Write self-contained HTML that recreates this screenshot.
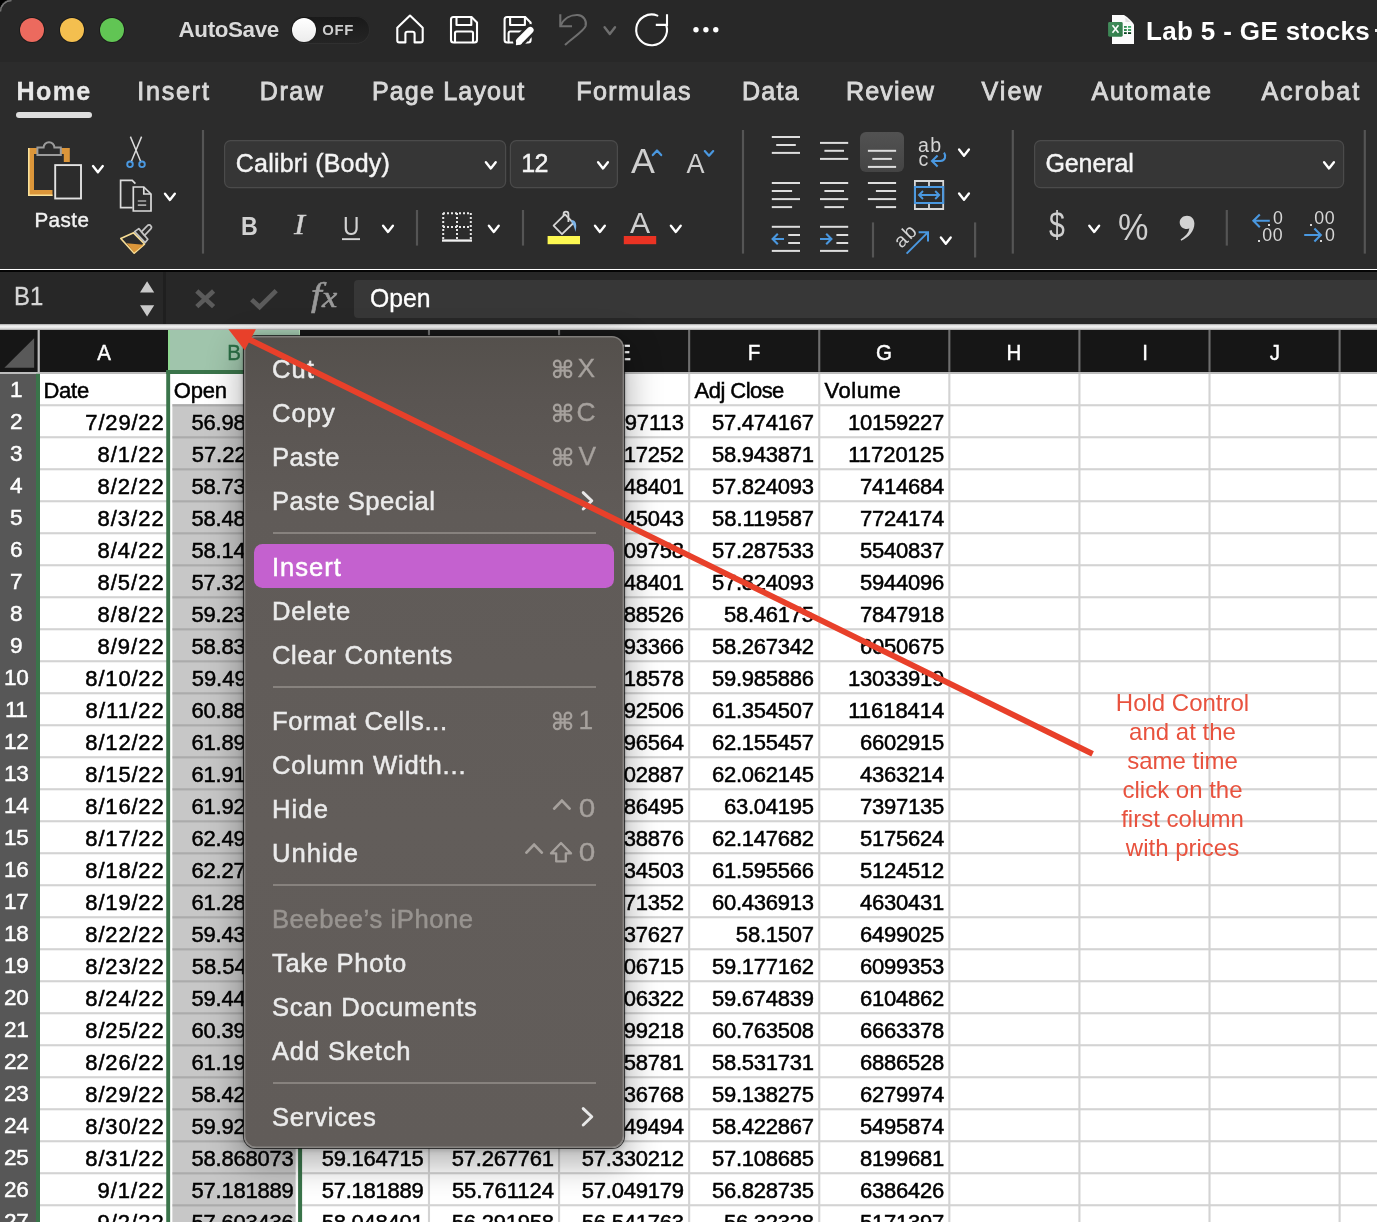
<!DOCTYPE html>
<html><head><meta charset="utf-8"><title>Lab 5 - GE stocks</title>
<style>
html,body{margin:0;padding:0;background:#000;}
body{width:1377px;height:1222px;overflow:hidden;position:relative;font-family:'Liberation Sans', sans-serif;}
#win{position:absolute;left:0;top:0;width:1377px;height:1222px;overflow:hidden;background:#fff;border-top-left-radius:11px;will-change:transform;}
.a{position:absolute;}
.t{position:absolute;white-space:pre;}
svg{position:absolute;overflow:visible;}
</style></head>
<body><div id="win">
<div class="a" style="left:0;top:0;width:1377px;height:62px;background:#282828"></div>
<div class="a" style="left:0;top:62px;width:1377px;height:207px;background:#2c2c2c"></div>
<div class="a" style="left:20px;top:18px;width:24px;height:24px;border-radius:50%;background:#ec6a5e;box-shadow:0 0 0 1px rgba(0,0,0,.32)"></div>
<div class="a" style="left:60px;top:18px;width:24px;height:24px;border-radius:50%;background:#f4bf4f;box-shadow:0 0 0 1px rgba(0,0,0,.32)"></div>
<div class="a" style="left:100px;top:18px;width:24px;height:24px;border-radius:50%;background:#61c554;box-shadow:0 0 0 1px rgba(0,0,0,.32)"></div>
<span class="t" style="top:18.84px;font-size:22.4px;line-height:22.4px;color:#dadada;font-weight:bold;letter-spacing:-0.360px;left:178.50px">AutoSave</span>
<div class="a" style="left:290.2px;top:15.7px;width:79.5px;height:28.3px;border-radius:14.2px;background:linear-gradient(#191919,#252525);box-shadow:inset 0 0 0 1px rgba(70,70,70,.35)"></div>
<div class="a" style="left:292px;top:17.9px;width:24.2px;height:24.2px;border-radius:50%;background:linear-gradient(#ffffff,#ececec);box-shadow:0 0 2px rgba(0,0,0,.5)"></div>
<span class="t" style="top:23.19px;font-size:14.9px;line-height:14.9px;color:#cdcdcd;font-weight:bold;letter-spacing:0.740px;left:322.20px">OFF</span>
<svg width="1377" height="62" style="left:0;top:0" viewBox="0 0 1377 62"><path fill="none" stroke="#fff" stroke-width="2.1" stroke-linejoin="round" stroke-linecap="round" d="M397.3 27.8 L410 15.6 L422.7 27.8 V40.4 a2 2 0 0 1 -2 2 H414.6 V33.8 a2 2 0 0 0 -2 -2 h-5.2 a2 2 0 0 0 -2 2 V42.4 H399.3 a2 2 0 0 1 -2 -2 Z"/><path fill="none" stroke="#fff" stroke-width="2.1" stroke-linejoin="round" stroke-linecap="round" d="M453.5 17 H471.5 L477 22.5 V40 a2.5 2.5 0 0 1 -2.5 2.5 H453.5 a2.5 2.5 0 0 1 -2.5 -2.5 V19.5 a2.5 2.5 0 0 1 2.5 -2.5 Z"/><path fill="none" stroke="#fff" stroke-width="2.1" stroke-linejoin="round" stroke-linecap="round" d="M456.5 17.3 V25 H471.3 V17.3"/><path fill="none" stroke="#fff" stroke-width="2.1" stroke-linejoin="round" stroke-linecap="round" d="M455 42.3 V33 a1.5 1.5 0 0 1 1.5 -1.5 H471.5 a1.5 1.5 0 0 1 1.5 1.5 V42.3"/><path fill="none" stroke="#fff" stroke-width="2.1" stroke-linejoin="round" stroke-linecap="round" d="M507.1 17 H525.1 L530.6 22.5 V40 a2.5 2.5 0 0 1 -2.5 2.5 H507.1 a2.5 2.5 0 0 1 -2.5 -2.5 V19.5 a2.5 2.5 0 0 1 2.5 -2.5 Z"/><path fill="none" stroke="#fff" stroke-width="2.1" stroke-linejoin="round" stroke-linecap="round" d="M510.1 17.3 V25 H524.9 V17.3"/><path fill="none" stroke="#fff" stroke-width="2.1" stroke-linejoin="round" stroke-linecap="round" d="M508.6 42.3 V33 a1.5 1.5 0 0 1 1.5 -1.5 H525.1 a1.5 1.5 0 0 1 1.5 1.5 V42.3"/><path d="M519 41.5 L530.5 30" stroke="#282828" stroke-width="12" stroke-linecap="round" fill="none"/><path d="M519.3 41.2 L530.3 30.2" stroke="#fff" stroke-width="6.6" stroke-linecap="round" fill="none"/><path d="M516.6 44.4 L521 43.4 L517.6 40 Z" fill="#fff" stroke="#fff" stroke-width="1.5" stroke-linejoin="round"/><path fill="none" stroke="#6f6f6f" stroke-width="2.1" stroke-linejoin="miter" stroke-linecap="butt" d="M560.3 14.3 V26.2 H572"/><path fill="none" stroke="#6f6f6f" stroke-width="2.1" stroke-linejoin="miter" stroke-linecap="butt" d="M560.6 25.6 C564 18 571 14.8 577.5 15 C583.5 15.3 587 20.5 585.6 26 C584.3 30.5 572 38.5 565 45"/><path d="M604.6 27.2 L609.8 34.0 L615.0 27.2" fill="none" stroke="#6f6f6f" stroke-width="2.4" stroke-linecap="round" stroke-linejoin="round"/><path fill="none" stroke="#fff" stroke-width="2.1" stroke-linejoin="round" stroke-linecap="round" d="M657.37 15.62 A15.4 15.4 0 1 0 666.33 25.40"/><path fill="none" stroke="#fff" stroke-width="2.1" d="M667 14.3 V24.9 H655.8"/><circle cx="696" cy="29.8" r="2.7" fill="#fff"/><circle cx="705.9" cy="29.8" r="2.7" fill="#fff"/><circle cx="715.8" cy="29.8" r="2.7" fill="#fff"/><path d="M1112 14.9 H1124 C1128 17.5 1132 21 1134 24.6 V43.9 H1112 Z" fill="#fbfbfb"/><path d="M1125.4 17.4 V22 H1130.4 Z" fill="#dedede"/><defs><linearGradient id="xlg" x1="0" y1="0" x2="1" y2="1"><stop offset="0" stop-color="#458f5e"/><stop offset="1" stop-color="#2e7a48"/></linearGradient></defs><rect x="1108.1" y="22.1" width="14.6" height="14.6" rx="1.4" fill="url(#xlg)"/><path d="M1112.5 25.3 L1118.5 32.7 M1118.5 25.3 L1112.5 32.7" stroke="#fff" stroke-width="1.6" fill="none"/><rect x="1124" y="26" width="2.8" height="1.8" fill="#2f8c52"/><rect x="1128" y="26" width="3.1" height="1.8" fill="#3faa68"/><rect x="1124" y="29.1" width="2.8" height="1.8" fill="#1f7a40"/><rect x="1128" y="29.1" width="3.1" height="1.8" fill="#2f9a58"/><rect x="1124" y="32.2" width="2.8" height="1.8" fill="#0a4a24"/><rect x="1128" y="32.2" width="3.1" height="1.8" fill="#063818"/><path d="M0.6 11.5 A10.9 10.9 0 0 1 11.5 0.6" fill="none" stroke="#7a7a7a" stroke-width="1.2"/></svg>
<span class="t" style="top:17.99px;font-size:26px;line-height:26px;color:#ffffff;font-weight:bold;left:1146.00px;letter-spacing:0.35px">Lab 5 - GE stocks</span>
<div class="a" style="left:1375.2px;top:29.2px;width:3px;height:2.6px;background:#e8e8e8"></div>
<span class="t" style="top:78.85px;font-size:25.1px;line-height:25.1px;color:#e8e8e8;font-weight:bold;letter-spacing:1.320px;-webkit-text-stroke:0.3px #e8e8e8;left:16.60px">Home</span>
<div class="a" style="left:16px;top:112px;width:76px;height:6px;border-radius:3px;background:#dedede"></div>
<span class="t" style="top:78.85px;font-size:25.1px;line-height:25.1px;color:#d9d9d9;letter-spacing:1.806px;-webkit-text-stroke:0.85px #d9d9d9;left:137.20px">Insert</span>
<span class="t" style="top:78.85px;font-size:25.1px;line-height:25.1px;color:#d9d9d9;letter-spacing:1.509px;-webkit-text-stroke:0.85px #d9d9d9;left:259.80px">Draw</span>
<span class="t" style="top:78.85px;font-size:25.1px;line-height:25.1px;color:#d9d9d9;letter-spacing:1.143px;-webkit-text-stroke:0.85px #d9d9d9;left:371.90px">Page Layout</span>
<span class="t" style="top:78.85px;font-size:25.1px;line-height:25.1px;color:#d9d9d9;letter-spacing:1.365px;-webkit-text-stroke:0.85px #d9d9d9;left:576.30px">Formulas</span>
<span class="t" style="top:78.85px;font-size:25.1px;line-height:25.1px;color:#d9d9d9;letter-spacing:1.146px;-webkit-text-stroke:0.85px #d9d9d9;left:742.10px">Data</span>
<span class="t" style="top:78.85px;font-size:25.1px;line-height:25.1px;color:#d9d9d9;letter-spacing:1.120px;-webkit-text-stroke:0.85px #d9d9d9;left:846.00px">Review</span>
<span class="t" style="top:78.85px;font-size:25.1px;line-height:25.1px;color:#d9d9d9;letter-spacing:2.016px;-webkit-text-stroke:0.85px #d9d9d9;left:981.50px">View</span>
<span class="t" style="top:78.85px;font-size:25.1px;line-height:25.1px;color:#d9d9d9;letter-spacing:1.710px;-webkit-text-stroke:0.85px #d9d9d9;left:1091.50px">Automate</span>
<span class="t" style="top:78.85px;font-size:25.1px;line-height:25.1px;color:#d9d9d9;letter-spacing:1.859px;-webkit-text-stroke:0.85px #d9d9d9;left:1261.50px">Acrobat</span>
<svg width="1377" height="150" style="left:0;top:120px" viewBox="0 120 1377 150"><rect x="201.9" y="130" width="2.2" height="123.6" fill="#555555"/><rect x="741.9" y="130" width="2.2" height="123.6" fill="#555555"/><rect x="1011.7" y="130" width="2.2" height="123.6" fill="#555555"/><rect x="1363.7" y="130" width="2.2" height="123.6" fill="#555555"/><rect x="415.9" y="210" width="2.2" height="35.599999999999994" fill="#555555"/><rect x="521.9" y="210" width="2.2" height="35.599999999999994" fill="#555555"/><rect x="1225.7" y="210" width="2.2" height="35.599999999999994" fill="#555555"/><rect x="871.9" y="222.4" width="2.2" height="35.099999999999994" fill="#555555"/><rect x="974.0" y="222.4" width="2.2" height="35.099999999999994" fill="#555555"/><path d="M66.8 162 V151 H31 V193 H52.5" fill="none" stroke="#dc963a" stroke-width="6"/><path d="M28.8 148 V195.2 H52.5" fill="none" stroke="#fbe29a" stroke-width="1.6"/><path d="M37.4 155 V147.6 H43.6 A5.4 5.4 0 0 1 54.4 147.6 H60.8 V155 Z" fill="#2c2c2c" stroke="#9b9b9b" stroke-width="2"/><rect x="55.2" y="165.1" width="25.8" height="33.4" fill="#2c2c2c" stroke="#e2e2e2" stroke-width="1.9"/><path d="M93.0 166.1 L97.9 172.3 L102.8 166.1" fill="none" stroke="#fff" stroke-width="2.4" stroke-linecap="round" stroke-linejoin="round"/><path d="M130.4 136.6 L140.6 161.2 M141.6 136.6 L131.4 161.2" stroke="#dadada" stroke-width="1.5" fill="none"/><circle cx="130" cy="164.3" r="2.8" fill="none" stroke="#4a98e0" stroke-width="1.9"/><circle cx="142" cy="164.3" r="2.8" fill="none" stroke="#4a98e0" stroke-width="1.9"/><path d="M132.6 207.6 H120.6 V180.4 H132.2 L135.4 183.6" fill="none" stroke="#dcdcdc" stroke-width="1.7"/><path d="M133.3 187 H143.8 L151 194 V211 H133.3 Z" fill="#2c2c2c" stroke="#dcdcdc" stroke-width="1.7"/><path d="M143.8 187 V194 H151" fill="none" stroke="#dcdcdc" stroke-width="1.7"/><path d="M137.8 201 H146.2 M137.8 205.2 H146.2" stroke="#a8a8a8" stroke-width="1.7"/><path d="M165.0 193.7 L169.9 199.9 L174.8 193.7" fill="none" stroke="#fff" stroke-width="2.4" stroke-linecap="round" stroke-linejoin="round"/><path d="M120.8 238.5 L133.6 232.8 L144.5 244 L134.2 253.2 Z" fill="none" stroke="#f6dc94" stroke-width="1.7" stroke-linejoin="round"/><path d="M126.5 243.2 L143.6 244.8 L134.2 252.6 Z" fill="#dc963a"/><path d="M134.6 231.6 L138.8 228.6 L147.8 239.2 L145.2 242.6 Z" fill="#2c2c2c" stroke="#c4c4c4" stroke-width="1.7" stroke-linejoin="round"/><path d="M141.4 231.8 L147.4 225.6 a2.2 2.2 0 0 1 3.4 0.2 a2.2 2.2 0 0 1 0 3 L144.6 235.4 Z" fill="#2c2c2c" stroke="#c4c4c4" stroke-width="1.7" stroke-linejoin="round"/><rect x="224.6" y="140.6" width="281" height="47" rx="6" fill="#363636" stroke="#4b4b4b" stroke-width="1.2"/><rect x="510.4" y="140.6" width="107" height="47" rx="6" fill="#363636" stroke="#4b4b4b" stroke-width="1.2"/><rect x="1034.6" y="140.6" width="309" height="47" rx="6" fill="#363636" stroke="#4b4b4b" stroke-width="1.2"/><path d="M485.9 162.2 L490.8 168.4 L495.7 162.2" fill="none" stroke="#fff" stroke-width="2.4" stroke-linecap="round" stroke-linejoin="round"/><path d="M598.1 162.2 L603.0 168.4 L607.9 162.2" fill="none" stroke="#fff" stroke-width="2.4" stroke-linecap="round" stroke-linejoin="round"/><path d="M1324.1 162.2 L1329.0 168.4 L1333.9 162.2" fill="none" stroke="#fff" stroke-width="2.4" stroke-linecap="round" stroke-linejoin="round"/><rect x="342" y="238.2" width="18" height="1.9" fill="#d8d8d8"/><path d="M383.1 225.7 L388.0 231.9 L392.9 225.7" fill="none" stroke="#fff" stroke-width="2.4" stroke-linecap="round" stroke-linejoin="round"/><path d="M488.9 225.7 L493.8 231.9 L498.7 225.7" fill="none" stroke="#fff" stroke-width="2.4" stroke-linecap="round" stroke-linejoin="round"/><path d="M595.0 225.7 L599.9 231.9 L604.8 225.7" fill="none" stroke="#fff" stroke-width="2.4" stroke-linecap="round" stroke-linejoin="round"/><path d="M670.9 225.7 L675.8 231.9 L680.7 225.7" fill="none" stroke="#fff" stroke-width="2.4" stroke-linecap="round" stroke-linejoin="round"/><path d="M652.8 155.1 L657.0 150.5 L661.2 155.1" fill="none" stroke="#4a98e0" stroke-width="2.2" stroke-linecap="round" stroke-linejoin="round"/><path d="M704.8 151.1 L709.0 155.7 L713.2 151.1" fill="none" stroke="#4a98e0" stroke-width="2.2" stroke-linecap="round" stroke-linejoin="round"/><path d="M443 213.2 H471 M443 227 H471 M443.2 213 V240 M457 213 V240 M470.8 213 V240" stroke="#e6e6e6" stroke-width="2" stroke-dasharray="2 2" fill="none"/><rect x="442" y="239.4" width="30" height="2.3" fill="#f0f0f0"/><path d="M553.6 225.6 L565 214.4 L573.4 223 L562 234.2 Z" fill="none" stroke="#d6d6d6" stroke-width="1.8" stroke-linejoin="round"/><path d="M563.6 216 V214 a2.4 2.4 0 0 1 4.8 0 V222" fill="none" stroke="#d6d6d6" stroke-width="1.8"/><path d="M570.6 220.6 C573.4 219.4 576 221 576.2 225 C576.4 228 575.8 230 575.4 232 C574.6 228 573.6 224.4 570.6 220.6 Z" fill="#7db4e8"/><rect x="547.6" y="236" width="32.4" height="8.2" fill="#fdf851"/><rect x="623.8" y="236" width="32.4" height="8.2" fill="#ea3323"/><rect x="771.8" y="136.0" width="28.2" height="2" fill="#dddddd"/><rect x="776.2" y="144.0" width="19.6" height="2" fill="#dddddd"/><rect x="771.8" y="151.9" width="28.2" height="2" fill="#dddddd"/><rect x="820.0" y="141.9" width="28.2" height="2" fill="#dddddd"/><rect x="824.4" y="149.8" width="19.6" height="2" fill="#dddddd"/><rect x="820.0" y="157.9" width="28.2" height="2" fill="#dddddd"/><defs><linearGradient id="selg" x1="0" y1="0" x2="0" y2="1"><stop offset="0" stop-color="#525252"/><stop offset="1" stop-color="#444"/></linearGradient></defs><rect x="860" y="132" width="44" height="40" rx="6" fill="url(#selg)"/><rect x="867.9" y="149.8" width="28.2" height="2" fill="#dddddd"/><rect x="872.3" y="157.9" width="19.6" height="2" fill="#dddddd"/><rect x="867.9" y="165.9" width="28.2" height="2" fill="#dddddd"/><rect x="771.8" y="182.0" width="28.2" height="2" fill="#dddddd"/><rect x="771.8" y="190.0" width="20.3" height="2" fill="#dddddd"/><rect x="771.8" y="198.1" width="28.2" height="2" fill="#dddddd"/><rect x="771.8" y="206.1" width="20.3" height="2" fill="#dddddd"/><rect x="820.0" y="182.0" width="28.2" height="2" fill="#dddddd"/><rect x="824.4" y="190.0" width="19.6" height="2" fill="#dddddd"/><rect x="820.0" y="198.1" width="28.2" height="2" fill="#dddddd"/><rect x="824.4" y="206.1" width="19.6" height="2" fill="#dddddd"/><rect x="867.9" y="182.0" width="28.2" height="2" fill="#dddddd"/><rect x="875.9" y="190.0" width="20.2" height="2" fill="#dddddd"/><rect x="867.9" y="198.1" width="28.2" height="2" fill="#dddddd"/><rect x="875.9" y="206.1" width="20.2" height="2" fill="#dddddd"/><rect x="771.8" y="225.8" width="28.2" height="2" fill="#dddddd"/><rect x="788.2" y="234.0" width="11.8" height="2" fill="#dddddd"/><rect x="788.2" y="242.0" width="11.8" height="2" fill="#dddddd"/><rect x="771.8" y="249.9" width="28.2" height="2" fill="#dddddd"/><rect x="820.0" y="225.8" width="28.2" height="2" fill="#dddddd"/><rect x="836.4" y="234.0" width="11.8" height="2" fill="#dddddd"/><rect x="836.4" y="242.0" width="11.8" height="2" fill="#dddddd"/><rect x="820.0" y="249.9" width="28.2" height="2" fill="#dddddd"/><path d="M772.6 239 H784 M777.8 233.8 L772.6 239 L777.8 244.2" fill="none" stroke="#4a98e0" stroke-width="2.1"/><path d="M820 239 H831.4 M826.2 233.8 L831.4 239 L826.2 244.2" fill="none" stroke="#4a98e0" stroke-width="2.1"/><path d="M944 152.6 C946.4 156 945.4 160.6 940.4 161 H932.4 M937.6 155.6 L932 161 L937.6 166.6" fill="none" stroke="#4a98e0" stroke-width="2.1"/><path d="M959.1 149.5 L964.0 155.7 L968.9 149.5" fill="none" stroke="#fff" stroke-width="2.4" stroke-linecap="round" stroke-linejoin="round"/><path d="M959.1 193.5 L964.0 199.7 L968.9 193.5" fill="none" stroke="#fff" stroke-width="2.4" stroke-linecap="round" stroke-linejoin="round"/><path d="M940.9 237.5 L945.8 243.7 L950.7 237.5" fill="none" stroke="#fff" stroke-width="2.4" stroke-linecap="round" stroke-linejoin="round"/><path d="M914.9 181 H943.2 V209 H914.9 Z M929 181 V186.6 M929 203.4 V209" fill="none" stroke="#d8d8d8" stroke-width="1.8"/><rect x="914.9" y="187" width="28.3" height="16" fill="none" stroke="#4a98e0" stroke-width="2"/><path d="M919 195 H939.2 M923 191 L919 195 L923 199 M935.2 191 L939.2 195 L935.2 199" fill="none" stroke="#4a98e0" stroke-width="1.9"/><path d="M906.6 253.6 L927.6 232.6 M918.6 232.2 H928 V241.6" fill="none" stroke="#4a98e0" stroke-width="2"/><path d="M1089.3 225.7 L1094.2 231.9 L1099.1 225.7" fill="none" stroke="#fff" stroke-width="2.4" stroke-linecap="round" stroke-linejoin="round"/><path d="M1187 215.8 C1191.4 215.8 1194.4 219 1194.4 223.6 C1194.4 231 1189 237.4 1181.2 240.8 L1180.6 239.4 C1185.4 236.6 1188.6 233 1189.4 228.6 C1188.6 228.9 1187.8 229 1187 229 C1182.9 229 1179.7 226.1 1179.7 222.4 C1179.7 218.7 1182.9 215.8 1187 215.8 Z" fill="#d2d2d2"/><path d="M1253.4 220.8 H1269.8 M1259.8 214.4 L1253.4 220.8 L1259.8 227.2" fill="none" stroke="#4a98e0" stroke-width="2.1"/><path d="M1304.2 235 H1320.8 M1314.4 228.6 L1320.8 235 L1314.4 241.4" fill="none" stroke="#4a98e0" stroke-width="2.1"/></svg>
<span class="t" style="top:210.26px;font-size:20.6px;line-height:20.6px;color:#f2f2f2;letter-spacing:0.466px;-webkit-text-stroke:0.45px #f2f2f2;left:34.40px">Paste</span>
<span class="t" style="top:151.24px;font-size:25px;line-height:25px;color:#f4f4f4;letter-spacing:0.197px;-webkit-text-stroke:0.45px #f4f4f4;left:235.80px">Calibri (Body)</span>
<span class="t" style="top:151.24px;font-size:25px;line-height:25px;color:#f4f4f4;letter-spacing:-0.506px;-webkit-text-stroke:0.45px #f4f4f4;left:521.20px">12</span>
<span class="t" style="top:151.34px;font-size:25px;line-height:25px;color:#f4f4f4;letter-spacing:-0.079px;-webkit-text-stroke:0.45px #f4f4f4;left:1045.40px">General</span>
<span class="t" style="top:212.85px;font-size:26.4px;line-height:26.4px;color:#d2d2d2;font-weight:bold;left:240.60px;transform:scaleX(.88);transform-origin:0 50%">B</span>
<span class="t" style="top:210.99px;font-size:28.6px;line-height:28.6px;color:#d2d2d2;font-family:'Liberation Serif', serif;font-style:italic;-webkit-text-stroke:0.3px #d2d2d2;left:293.60px;transform:scaleX(1.15);transform-origin:0 50%">I</span>
<span class="t" style="top:213.05px;font-size:26.4px;line-height:26.4px;color:#d2d2d2;left:342.60px;transform:scaleX(.86);transform-origin:0 50%">U</span>
<span class="t" style="top:143.70px;font-size:35.8px;line-height:35.8px;color:#cfcfcf;left:631.00px">A</span>
<span class="t" style="top:151.14px;font-size:27px;line-height:27px;color:#cfcfcf;left:686.60px">A</span>
<span class="t" style="top:208.44px;font-size:30.2px;line-height:30.2px;color:#cfcfcf;left:629.90px">A</span>
<span class="t" style="top:135.61px;font-size:19.6px;line-height:19.6px;color:#d4d4d4;letter-spacing:1.402px;left:918.00px">ab</span>
<span class="t" style="top:149.81px;font-size:19.6px;line-height:19.6px;color:#d4d4d4;left:918.40px">c</span>
<span class="t" style="top:231.81px;font-size:19.6px;line-height:19.6px;color:#d4d4d4;letter-spacing:1.402px;left:903.60px;transform:rotate(-45deg);transform-origin:0 100%">ab</span>
<span class="t" style="top:208.10px;font-size:36.5px;line-height:36.5px;color:#cfcfcf;left:1048.60px;transform:scaleX(.78);transform-origin:0 50%">$</span>
<span class="t" style="top:209.79px;font-size:36.4px;line-height:36.4px;color:#cfcfcf;left:1118.40px;transform:scaleX(.94);transform-origin:0 50%">%</span>
<span class="t" style="top:210.33px;font-size:17.8px;line-height:17.8px;color:#d6d6d6;left:1272.90px;letter-spacing:0.5px">0</span>
<span class="t" style="top:226.63px;font-size:17.8px;line-height:17.8px;color:#d6d6d6;left:1262.30px;letter-spacing:0.5px">00</span>
<span class="t" style="top:210.33px;font-size:17.8px;line-height:17.8px;color:#d6d6d6;left:1314.30px;letter-spacing:0.5px">00</span>
<span class="t" style="top:226.63px;font-size:17.8px;line-height:17.8px;color:#d6d6d6;left:1324.90px;letter-spacing:0.5px">0</span>
<div class="a" style="left:1267.8px;top:223.6px;width:2.3px;height:2.3px;background:#d6d6d6"></div>
<div class="a" style="left:1257.8px;top:239.6px;width:2.3px;height:2.3px;background:#d6d6d6"></div>
<div class="a" style="left:1309.8px;top:223.6px;width:2.3px;height:2.3px;background:#d6d6d6"></div>
<div class="a" style="left:1319.8px;top:239.6px;width:2.3px;height:2.3px;background:#d6d6d6"></div>
<div class="a" style="left:0;top:269.5px;width:1377px;height:2.7px;background:#050505"></div>
<div class="a" style="left:0;top:272.1px;width:1377px;height:52px;background:#272727"></div>
<div class="a" style="left:163.4px;top:271.6px;width:2.6px;height:52.4px;background:#1f1f1f"></div>
<div class="a" style="left:354px;top:280.2px;width:1023px;height:37.8px;background:#373737;border-radius:4px 0 0 4px"></div>
<span class="t" style="top:284.04px;font-size:25.7px;line-height:25.7px;color:#d6d6d6;-webkit-text-stroke:0.3px #d6d6d6;left:13.90px;transform:scaleX(0.9293);transform-origin:0 50%">B1</span>
<span class="t" style="top:286.14px;font-size:25.7px;line-height:25.7px;color:#ffffff;-webkit-text-stroke:0.3px #ffffff;left:369.50px;transform:scaleX(0.9643);transform-origin:0 50%">Open</span>
<svg width="1377" height="60" style="left:0;top:270px" viewBox="0 270 1377 60"><path d="M140 292.6 L147.1 281.2 L154.2 292.6 Z M140 305.2 L147.1 316.6 L154.2 305.2 Z" fill="#c9c9c9"/><path d="M196.8 291 L213.6 306.6 M213.6 291 L196.8 306.6" stroke="#5b5b5b" stroke-width="4.6" fill="none"/><path d="M251.6 299.6 L259.6 307 L276.2 290.6" stroke="#5b5b5b" stroke-width="4.6" fill="none"/></svg>
<span class="t" style="top:277.98px;font-size:34px;line-height:34px;color:#9a9a9a;font-family:'Liberation Serif', serif;font-style:italic;-webkit-text-stroke:0.55px #9a9a9a;left:310.50px;transform:scaleX(1.15);transform-origin:0 50%">f</span>
<span class="t" style="top:282.85px;font-size:29px;line-height:29px;color:#9a9a9a;font-family:'Liberation Serif', serif;font-style:italic;-webkit-text-stroke:0.55px #9a9a9a;left:322.40px;transform:scaleX(1.18);transform-origin:0 50%">x</span>
<div class="a" style="left:0;top:323.7px;width:1377px;height:6.3px;background:linear-gradient(#a4a4a4 0,#e0e0e0 22%,#f3f3f3 48%,#d2d2d2 78%,#a0a0a0 100%)"></div><div class="a" style="left:0;top:329.9px;width:1377px;height:42.1px;background:#161616"></div>
<div class="a" style="left:0;top:371.6px;width:1377px;height:2.4px;background:#bdbdbd"></div>
<div class="a" style="left:0;top:374px;width:38px;height:848px;background:#575757"></div>
<div class="a" style="left:168.04px;top:329.6px;width:131.89px;height:42.4px;background:#a0c5ac"></div>
<div class="a" style="left:167.84px;top:329.6px;width:1.8px;height:41px;background:#8fd891"></div>
<div class="a" style="left:298.8px;top:329.9px;width:1.4px;height:40.4px;background:#b4e3b8"></div>
<svg width="1377" height="893" style="left:0;top:329px" viewBox="0 329 1377 893"><path d="M4.4 367.8 H34.1 V338.3 Z" fill="#595959"/><rect x="37.6" y="330" width="2.2" height="42" fill="#bfbfbf"/><rect x="427.92" y="330" width="2.1" height="41.8" fill="#6e6e6e"/><rect x="558.01" y="330" width="2.1" height="41.8" fill="#6e6e6e"/><rect x="688.10" y="330" width="2.1" height="41.8" fill="#6e6e6e"/><rect x="818.19" y="330" width="2.1" height="41.8" fill="#6e6e6e"/><rect x="948.28" y="330" width="2.1" height="41.8" fill="#6e6e6e"/><rect x="1078.37" y="330" width="2.1" height="41.8" fill="#6e6e6e"/><rect x="1208.46" y="330" width="2.1" height="41.8" fill="#6e6e6e"/><rect x="1338.55" y="330" width="2.1" height="41.8" fill="#6e6e6e"/><rect x="172.2" y="404.80" width="123.6" height="1222" fill="#c7c7c7"/><rect x="297.83" y="374" width="2.1" height="848" fill="#d3d3d3"/><rect x="427.92" y="374" width="2.1" height="848" fill="#d3d3d3"/><rect x="558.01" y="374" width="2.1" height="848" fill="#d3d3d3"/><rect x="688.10" y="374" width="2.1" height="848" fill="#d3d3d3"/><rect x="818.19" y="374" width="2.1" height="848" fill="#d3d3d3"/><rect x="948.28" y="374" width="2.1" height="848" fill="#d3d3d3"/><rect x="1078.37" y="374" width="2.1" height="848" fill="#d3d3d3"/><rect x="1208.46" y="374" width="2.1" height="848" fill="#d3d3d3"/><rect x="1338.55" y="374" width="2.1" height="848" fill="#d3d3d3"/><rect x="40" y="404.20" width="1337" height="2.1" fill="#d3d3d3"/><rect x="172.2" y="404.20" width="123.6" height="2.3" fill="#ababab"/><rect x="40" y="436.20" width="1337" height="2.1" fill="#d3d3d3"/><rect x="172.2" y="436.20" width="123.6" height="2.3" fill="#ababab"/><rect x="40" y="468.20" width="1337" height="2.1" fill="#d3d3d3"/><rect x="172.2" y="468.20" width="123.6" height="2.3" fill="#ababab"/><rect x="40" y="500.20" width="1337" height="2.1" fill="#d3d3d3"/><rect x="172.2" y="500.20" width="123.6" height="2.3" fill="#ababab"/><rect x="40" y="532.20" width="1337" height="2.1" fill="#d3d3d3"/><rect x="172.2" y="532.20" width="123.6" height="2.3" fill="#ababab"/><rect x="40" y="564.20" width="1337" height="2.1" fill="#d3d3d3"/><rect x="172.2" y="564.20" width="123.6" height="2.3" fill="#ababab"/><rect x="40" y="596.20" width="1337" height="2.1" fill="#d3d3d3"/><rect x="172.2" y="596.20" width="123.6" height="2.3" fill="#ababab"/><rect x="40" y="628.20" width="1337" height="2.1" fill="#d3d3d3"/><rect x="172.2" y="628.20" width="123.6" height="2.3" fill="#ababab"/><rect x="40" y="660.20" width="1337" height="2.1" fill="#d3d3d3"/><rect x="172.2" y="660.20" width="123.6" height="2.3" fill="#ababab"/><rect x="40" y="692.20" width="1337" height="2.1" fill="#d3d3d3"/><rect x="172.2" y="692.20" width="123.6" height="2.3" fill="#ababab"/><rect x="40" y="724.20" width="1337" height="2.1" fill="#d3d3d3"/><rect x="172.2" y="724.20" width="123.6" height="2.3" fill="#ababab"/><rect x="40" y="756.20" width="1337" height="2.1" fill="#d3d3d3"/><rect x="172.2" y="756.20" width="123.6" height="2.3" fill="#ababab"/><rect x="40" y="788.20" width="1337" height="2.1" fill="#d3d3d3"/><rect x="172.2" y="788.20" width="123.6" height="2.3" fill="#ababab"/><rect x="40" y="820.20" width="1337" height="2.1" fill="#d3d3d3"/><rect x="172.2" y="820.20" width="123.6" height="2.3" fill="#ababab"/><rect x="40" y="852.20" width="1337" height="2.1" fill="#d3d3d3"/><rect x="172.2" y="852.20" width="123.6" height="2.3" fill="#ababab"/><rect x="40" y="884.20" width="1337" height="2.1" fill="#d3d3d3"/><rect x="172.2" y="884.20" width="123.6" height="2.3" fill="#ababab"/><rect x="40" y="916.20" width="1337" height="2.1" fill="#d3d3d3"/><rect x="172.2" y="916.20" width="123.6" height="2.3" fill="#ababab"/><rect x="40" y="948.20" width="1337" height="2.1" fill="#d3d3d3"/><rect x="172.2" y="948.20" width="123.6" height="2.3" fill="#ababab"/><rect x="40" y="980.20" width="1337" height="2.1" fill="#d3d3d3"/><rect x="172.2" y="980.20" width="123.6" height="2.3" fill="#ababab"/><rect x="40" y="1012.20" width="1337" height="2.1" fill="#d3d3d3"/><rect x="172.2" y="1012.20" width="123.6" height="2.3" fill="#ababab"/><rect x="40" y="1044.20" width="1337" height="2.1" fill="#d3d3d3"/><rect x="172.2" y="1044.20" width="123.6" height="2.3" fill="#ababab"/><rect x="40" y="1076.20" width="1337" height="2.1" fill="#d3d3d3"/><rect x="172.2" y="1076.20" width="123.6" height="2.3" fill="#ababab"/><rect x="40" y="1108.20" width="1337" height="2.1" fill="#d3d3d3"/><rect x="172.2" y="1108.20" width="123.6" height="2.3" fill="#ababab"/><rect x="40" y="1140.20" width="1337" height="2.1" fill="#d3d3d3"/><rect x="172.2" y="1140.20" width="123.6" height="2.3" fill="#ababab"/><rect x="40" y="1172.20" width="1337" height="2.1" fill="#d3d3d3"/><rect x="172.2" y="1172.20" width="123.6" height="2.3" fill="#ababab"/><rect x="40" y="1204.20" width="1337" height="2.1" fill="#d3d3d3"/><rect x="172.2" y="1204.20" width="123.6" height="2.3" fill="#ababab"/><rect x="40" y="1236.20" width="1337" height="2.1" fill="#d3d3d3"/><rect x="172.2" y="1236.20" width="123.6" height="2.3" fill="#ababab"/><rect x="170" y="374" width="2.2" height="1222" fill="#fff"/><rect x="295.8" y="374" width="2.4" height="1222" fill="#fff"/><rect x="36" y="373.8" width="4" height="1222" fill="#3a744a"/><rect x="166.24" y="370" width="3.9" height="1222" fill="#3a744a"/><rect x="298.1" y="370" width="4" height="1222" fill="#3a744a"/><rect x="166.24" y="370" width="135.86" height="4" fill="#3a744a"/></svg>
<span class="t" style="top:341.40px;font-size:22.8px;line-height:22.8px;color:#ffffff;-webkit-text-stroke:0.45px #ffffff;left:-196.21px;width:600px;text-align:center;transform:scaleX(.9)">A</span>
<span class="t" style="top:341.40px;font-size:22.8px;line-height:22.8px;color:#2a6e45;-webkit-text-stroke:0.45px #2a6e45;left:-66.11px;width:600px;text-align:center;transform:scaleX(.9)">B</span>
<span class="t" style="top:341.40px;font-size:22.8px;line-height:22.8px;color:#ffffff;-webkit-text-stroke:0.45px #ffffff;left:63.98px;width:600px;text-align:center;transform:scaleX(.9)">C</span>
<span class="t" style="top:341.40px;font-size:22.8px;line-height:22.8px;color:#ffffff;-webkit-text-stroke:0.45px #ffffff;left:194.06px;width:600px;text-align:center;transform:scaleX(.9)">D</span>
<span class="t" style="top:341.40px;font-size:22.8px;line-height:22.8px;color:#ffffff;-webkit-text-stroke:0.45px #ffffff;left:324.15px;width:600px;text-align:center;transform:scaleX(.9)">E</span>
<span class="t" style="top:341.40px;font-size:22.8px;line-height:22.8px;color:#ffffff;-webkit-text-stroke:0.45px #ffffff;left:454.25px;width:600px;text-align:center;transform:scaleX(.9)">F</span>
<span class="t" style="top:341.40px;font-size:22.8px;line-height:22.8px;color:#ffffff;-webkit-text-stroke:0.45px #ffffff;left:584.33px;width:600px;text-align:center;transform:scaleX(.9)">G</span>
<span class="t" style="top:341.40px;font-size:22.8px;line-height:22.8px;color:#ffffff;-webkit-text-stroke:0.45px #ffffff;left:714.42px;width:600px;text-align:center;transform:scaleX(.9)">H</span>
<span class="t" style="top:341.40px;font-size:22.8px;line-height:22.8px;color:#ffffff;-webkit-text-stroke:0.45px #ffffff;left:844.52px;width:600px;text-align:center;transform:scaleX(.9)">I</span>
<span class="t" style="top:341.40px;font-size:22.8px;line-height:22.8px;color:#ffffff;-webkit-text-stroke:0.45px #ffffff;left:974.61px;width:600px;text-align:center;transform:scaleX(.9)">J</span>
<span class="t" style="top:379.17px;font-size:22.6px;line-height:22.6px;color:#ffffff;-webkit-text-stroke:0.45px #ffffff;left:-283.80px;width:600px;text-align:center;letter-spacing:-0.4px">1</span>
<span class="t" style="top:411.17px;font-size:22.6px;line-height:22.6px;color:#ffffff;-webkit-text-stroke:0.45px #ffffff;left:-283.80px;width:600px;text-align:center;letter-spacing:-0.4px">2</span>
<span class="t" style="top:443.17px;font-size:22.6px;line-height:22.6px;color:#ffffff;-webkit-text-stroke:0.45px #ffffff;left:-283.80px;width:600px;text-align:center;letter-spacing:-0.4px">3</span>
<span class="t" style="top:475.17px;font-size:22.6px;line-height:22.6px;color:#ffffff;-webkit-text-stroke:0.45px #ffffff;left:-283.80px;width:600px;text-align:center;letter-spacing:-0.4px">4</span>
<span class="t" style="top:507.17px;font-size:22.6px;line-height:22.6px;color:#ffffff;-webkit-text-stroke:0.45px #ffffff;left:-283.80px;width:600px;text-align:center;letter-spacing:-0.4px">5</span>
<span class="t" style="top:539.17px;font-size:22.6px;line-height:22.6px;color:#ffffff;-webkit-text-stroke:0.45px #ffffff;left:-283.80px;width:600px;text-align:center;letter-spacing:-0.4px">6</span>
<span class="t" style="top:571.17px;font-size:22.6px;line-height:22.6px;color:#ffffff;-webkit-text-stroke:0.45px #ffffff;left:-283.80px;width:600px;text-align:center;letter-spacing:-0.4px">7</span>
<span class="t" style="top:603.17px;font-size:22.6px;line-height:22.6px;color:#ffffff;-webkit-text-stroke:0.45px #ffffff;left:-283.80px;width:600px;text-align:center;letter-spacing:-0.4px">8</span>
<span class="t" style="top:635.17px;font-size:22.6px;line-height:22.6px;color:#ffffff;-webkit-text-stroke:0.45px #ffffff;left:-283.80px;width:600px;text-align:center;letter-spacing:-0.4px">9</span>
<span class="t" style="top:667.17px;font-size:22.6px;line-height:22.6px;color:#ffffff;-webkit-text-stroke:0.45px #ffffff;left:-283.80px;width:600px;text-align:center;letter-spacing:-0.4px">10</span>
<span class="t" style="top:699.17px;font-size:22.6px;line-height:22.6px;color:#ffffff;-webkit-text-stroke:0.45px #ffffff;left:-283.80px;width:600px;text-align:center;letter-spacing:-0.4px">11</span>
<span class="t" style="top:731.17px;font-size:22.6px;line-height:22.6px;color:#ffffff;-webkit-text-stroke:0.45px #ffffff;left:-283.80px;width:600px;text-align:center;letter-spacing:-0.4px">12</span>
<span class="t" style="top:763.17px;font-size:22.6px;line-height:22.6px;color:#ffffff;-webkit-text-stroke:0.45px #ffffff;left:-283.80px;width:600px;text-align:center;letter-spacing:-0.4px">13</span>
<span class="t" style="top:795.17px;font-size:22.6px;line-height:22.6px;color:#ffffff;-webkit-text-stroke:0.45px #ffffff;left:-283.80px;width:600px;text-align:center;letter-spacing:-0.4px">14</span>
<span class="t" style="top:827.17px;font-size:22.6px;line-height:22.6px;color:#ffffff;-webkit-text-stroke:0.45px #ffffff;left:-283.80px;width:600px;text-align:center;letter-spacing:-0.4px">15</span>
<span class="t" style="top:859.17px;font-size:22.6px;line-height:22.6px;color:#ffffff;-webkit-text-stroke:0.45px #ffffff;left:-283.80px;width:600px;text-align:center;letter-spacing:-0.4px">16</span>
<span class="t" style="top:891.17px;font-size:22.6px;line-height:22.6px;color:#ffffff;-webkit-text-stroke:0.45px #ffffff;left:-283.80px;width:600px;text-align:center;letter-spacing:-0.4px">17</span>
<span class="t" style="top:923.17px;font-size:22.6px;line-height:22.6px;color:#ffffff;-webkit-text-stroke:0.45px #ffffff;left:-283.80px;width:600px;text-align:center;letter-spacing:-0.4px">18</span>
<span class="t" style="top:955.17px;font-size:22.6px;line-height:22.6px;color:#ffffff;-webkit-text-stroke:0.45px #ffffff;left:-283.80px;width:600px;text-align:center;letter-spacing:-0.4px">19</span>
<span class="t" style="top:987.17px;font-size:22.6px;line-height:22.6px;color:#ffffff;-webkit-text-stroke:0.45px #ffffff;left:-283.80px;width:600px;text-align:center;letter-spacing:-0.4px">20</span>
<span class="t" style="top:1019.17px;font-size:22.6px;line-height:22.6px;color:#ffffff;-webkit-text-stroke:0.45px #ffffff;left:-283.80px;width:600px;text-align:center;letter-spacing:-0.4px">21</span>
<span class="t" style="top:1051.17px;font-size:22.6px;line-height:22.6px;color:#ffffff;-webkit-text-stroke:0.45px #ffffff;left:-283.80px;width:600px;text-align:center;letter-spacing:-0.4px">22</span>
<span class="t" style="top:1083.17px;font-size:22.6px;line-height:22.6px;color:#ffffff;-webkit-text-stroke:0.45px #ffffff;left:-283.80px;width:600px;text-align:center;letter-spacing:-0.4px">23</span>
<span class="t" style="top:1115.17px;font-size:22.6px;line-height:22.6px;color:#ffffff;-webkit-text-stroke:0.45px #ffffff;left:-283.80px;width:600px;text-align:center;letter-spacing:-0.4px">24</span>
<span class="t" style="top:1147.17px;font-size:22.6px;line-height:22.6px;color:#ffffff;-webkit-text-stroke:0.45px #ffffff;left:-283.80px;width:600px;text-align:center;letter-spacing:-0.4px">25</span>
<span class="t" style="top:1179.17px;font-size:22.6px;line-height:22.6px;color:#ffffff;-webkit-text-stroke:0.45px #ffffff;left:-283.80px;width:600px;text-align:center;letter-spacing:-0.4px">26</span>
<span class="t" style="top:1211.17px;font-size:22.6px;line-height:22.6px;color:#ffffff;-webkit-text-stroke:0.45px #ffffff;left:-283.80px;width:600px;text-align:center;letter-spacing:-0.4px">27</span>
<span class="t" style="top:379.68px;font-size:22px;line-height:22px;color:#000;letter-spacing:-0.221px;-webkit-text-stroke:0.5px #000;left:43.45px">Date</span>
<span class="t" style="top:379.68px;font-size:22px;line-height:22px;color:#000;letter-spacing:-0.207px;-webkit-text-stroke:0.5px #000;left:173.74px">Open</span>
<span class="t" style="top:379.68px;font-size:22px;line-height:22px;color:#000;-webkit-text-stroke:0.5px #000;left:303.73px">High</span>
<span class="t" style="top:379.68px;font-size:22px;line-height:22px;color:#000;-webkit-text-stroke:0.5px #000;left:433.82px">Low</span>
<span class="t" style="top:379.68px;font-size:22px;line-height:22px;color:#000;-webkit-text-stroke:0.5px #000;left:563.91px">Close</span>
<span class="t" style="top:379.68px;font-size:22px;line-height:22px;color:#000;letter-spacing:-0.551px;-webkit-text-stroke:0.5px #000;left:694.60px">Adj Close</span>
<span class="t" style="top:379.68px;font-size:22px;line-height:22px;color:#000;letter-spacing:0.602px;-webkit-text-stroke:0.5px #000;left:824.39px">Volume</span>
<span class="t" style="top:411.68px;font-size:22px;line-height:22px;color:#000;letter-spacing:0.813px;-webkit-text-stroke:0.5px #000;right:1212.55px">7/29/22</span>
<span class="t" style="top:411.68px;font-size:22px;line-height:22px;color:#000;letter-spacing:-0.224px;-webkit-text-stroke:0.5px #000;right:1083.49px">56.982217</span>
<span class="t" style="top:411.68px;font-size:22px;line-height:22px;color:#000;letter-spacing:-0.044px;-webkit-text-stroke:0.5px #000;right:953.22px">57.752117</span>
<span class="t" style="top:411.68px;font-size:22px;line-height:22px;color:#000;letter-spacing:-0.224px;-webkit-text-stroke:0.5px #000;right:823.31px">56.557767</span>
<span class="t" style="top:411.68px;font-size:22px;line-height:22px;color:#000;letter-spacing:-0.044px;-webkit-text-stroke:0.5px #000;right:693.04px">57.697113</span>
<span class="t" style="top:411.68px;font-size:22px;line-height:22px;color:#000;letter-spacing:-0.224px;-webkit-text-stroke:0.5px #000;right:563.13px">57.474167</span>
<span class="t" style="top:411.68px;font-size:22px;line-height:22px;color:#000;letter-spacing:-0.256px;-webkit-text-stroke:0.5px #000;right:433.08px">10159227</span>
<span class="t" style="top:443.68px;font-size:22px;line-height:22px;color:#000;letter-spacing:0.991px;-webkit-text-stroke:0.5px #000;right:1212.37px">8/1/22</span>
<span class="t" style="top:443.68px;font-size:22px;line-height:22px;color:#000;letter-spacing:-0.044px;-webkit-text-stroke:0.5px #000;right:1083.31px">57.221145</span>
<span class="t" style="top:443.68px;font-size:22px;line-height:22px;color:#000;letter-spacing:-0.224px;-webkit-text-stroke:0.5px #000;right:953.40px">59.250633</span>
<span class="t" style="top:443.68px;font-size:22px;line-height:22px;color:#000;letter-spacing:-0.224px;-webkit-text-stroke:0.5px #000;right:823.31px">57.016871</span>
<span class="t" style="top:443.68px;font-size:22px;line-height:22px;color:#000;letter-spacing:-0.221px;-webkit-text-stroke:0.5px #000;right:693.22px">59.17252</span>
<span class="t" style="top:443.68px;font-size:22px;line-height:22px;color:#000;letter-spacing:-0.224px;-webkit-text-stroke:0.5px #000;right:563.13px">58.943871</span>
<span class="t" style="top:443.68px;font-size:22px;line-height:22px;color:#000;letter-spacing:-0.051px;-webkit-text-stroke:0.5px #000;right:432.87px">11720125</span>
<span class="t" style="top:475.68px;font-size:22px;line-height:22px;color:#000;letter-spacing:0.991px;-webkit-text-stroke:0.5px #000;right:1212.37px">8/2/22</span>
<span class="t" style="top:475.68px;font-size:22px;line-height:22px;color:#000;letter-spacing:-0.224px;-webkit-text-stroke:0.5px #000;right:1083.49px">58.730364</span>
<span class="t" style="top:475.68px;font-size:22px;line-height:22px;color:#000;letter-spacing:-0.224px;-webkit-text-stroke:0.5px #000;right:953.40px">59.008594</span>
<span class="t" style="top:475.68px;font-size:22px;line-height:22px;color:#000;letter-spacing:-0.224px;-webkit-text-stroke:0.5px #000;right:823.31px">57.524093</span>
<span class="t" style="top:475.68px;font-size:22px;line-height:22px;color:#000;letter-spacing:-0.224px;-webkit-text-stroke:0.5px #000;right:693.22px">58.048401</span>
<span class="t" style="top:475.68px;font-size:22px;line-height:22px;color:#000;letter-spacing:-0.224px;-webkit-text-stroke:0.5px #000;right:563.13px">57.824093</span>
<span class="t" style="top:475.68px;font-size:22px;line-height:22px;color:#000;letter-spacing:-0.257px;-webkit-text-stroke:0.5px #000;right:433.08px">7414684</span>
<span class="t" style="top:507.68px;font-size:22px;line-height:22px;color:#000;letter-spacing:0.991px;-webkit-text-stroke:0.5px #000;right:1212.37px">8/3/22</span>
<span class="t" style="top:507.68px;font-size:22px;line-height:22px;color:#000;letter-spacing:-0.224px;-webkit-text-stroke:0.5px #000;right:1083.49px">58.489131</span>
<span class="t" style="top:507.68px;font-size:22px;line-height:22px;color:#000;letter-spacing:-0.224px;-webkit-text-stroke:0.5px #000;right:953.40px">58.767723</span>
<span class="t" style="top:507.68px;font-size:22px;line-height:22px;color:#000;letter-spacing:-0.224px;-webkit-text-stroke:0.5px #000;right:823.31px">57.719587</span>
<span class="t" style="top:507.68px;font-size:22px;line-height:22px;color:#000;letter-spacing:-0.224px;-webkit-text-stroke:0.5px #000;right:693.22px">58.345043</span>
<span class="t" style="top:507.68px;font-size:22px;line-height:22px;color:#000;letter-spacing:-0.044px;-webkit-text-stroke:0.5px #000;right:562.95px">58.119587</span>
<span class="t" style="top:507.68px;font-size:22px;line-height:22px;color:#000;letter-spacing:-0.257px;-webkit-text-stroke:0.5px #000;right:433.08px">7724174</span>
<span class="t" style="top:539.68px;font-size:22px;line-height:22px;color:#000;letter-spacing:0.991px;-webkit-text-stroke:0.5px #000;right:1212.37px">8/4/22</span>
<span class="t" style="top:539.68px;font-size:22px;line-height:22px;color:#000;letter-spacing:-0.224px;-webkit-text-stroke:0.5px #000;right:1083.49px">58.141718</span>
<span class="t" style="top:539.68px;font-size:22px;line-height:22px;color:#000;letter-spacing:-0.224px;-webkit-text-stroke:0.5px #000;right:953.40px">58.517094</span>
<span class="t" style="top:539.68px;font-size:22px;line-height:22px;color:#000;letter-spacing:-0.224px;-webkit-text-stroke:0.5px #000;right:823.31px">56.987533</span>
<span class="t" style="top:539.68px;font-size:22px;line-height:22px;color:#000;letter-spacing:-0.224px;-webkit-text-stroke:0.5px #000;right:693.22px">57.509758</span>
<span class="t" style="top:539.68px;font-size:22px;line-height:22px;color:#000;letter-spacing:-0.224px;-webkit-text-stroke:0.5px #000;right:563.13px">57.287533</span>
<span class="t" style="top:539.68px;font-size:22px;line-height:22px;color:#000;letter-spacing:-0.257px;-webkit-text-stroke:0.5px #000;right:433.08px">5540837</span>
<span class="t" style="top:571.68px;font-size:22px;line-height:22px;color:#000;letter-spacing:0.991px;-webkit-text-stroke:0.5px #000;right:1212.37px">8/5/22</span>
<span class="t" style="top:571.68px;font-size:22px;line-height:22px;color:#000;letter-spacing:-0.224px;-webkit-text-stroke:0.5px #000;right:1083.49px">57.324093</span>
<span class="t" style="top:571.68px;font-size:22px;line-height:22px;color:#000;letter-spacing:-0.044px;-webkit-text-stroke:0.5px #000;right:953.22px">57.931133</span>
<span class="t" style="top:571.68px;font-size:22px;line-height:22px;color:#000;letter-spacing:-0.224px;-webkit-text-stroke:0.5px #000;right:823.31px">56.924093</span>
<span class="t" style="top:571.68px;font-size:22px;line-height:22px;color:#000;letter-spacing:-0.224px;-webkit-text-stroke:0.5px #000;right:693.22px">58.048401</span>
<span class="t" style="top:571.68px;font-size:22px;line-height:22px;color:#000;letter-spacing:-0.224px;-webkit-text-stroke:0.5px #000;right:563.13px">57.824093</span>
<span class="t" style="top:571.68px;font-size:22px;line-height:22px;color:#000;letter-spacing:-0.257px;-webkit-text-stroke:0.5px #000;right:433.08px">5944096</span>
<span class="t" style="top:603.68px;font-size:22px;line-height:22px;color:#000;letter-spacing:0.991px;-webkit-text-stroke:0.5px #000;right:1212.37px">8/8/22</span>
<span class="t" style="top:603.68px;font-size:22px;line-height:22px;color:#000;letter-spacing:-0.224px;-webkit-text-stroke:0.5px #000;right:1083.49px">59.234567</span>
<span class="t" style="top:603.68px;font-size:22px;line-height:22px;color:#000;letter-spacing:-0.221px;-webkit-text-stroke:0.5px #000;right:953.40px">59.64175</span>
<span class="t" style="top:603.68px;font-size:22px;line-height:22px;color:#000;letter-spacing:-0.221px;-webkit-text-stroke:0.5px #000;right:823.31px">58.06175</span>
<span class="t" style="top:603.68px;font-size:22px;line-height:22px;color:#000;letter-spacing:-0.224px;-webkit-text-stroke:0.5px #000;right:693.22px">58.688526</span>
<span class="t" style="top:603.68px;font-size:22px;line-height:22px;color:#000;letter-spacing:-0.221px;-webkit-text-stroke:0.5px #000;right:563.13px">58.46175</span>
<span class="t" style="top:603.68px;font-size:22px;line-height:22px;color:#000;letter-spacing:-0.257px;-webkit-text-stroke:0.5px #000;right:433.08px">7847918</span>
<span class="t" style="top:635.68px;font-size:22px;line-height:22px;color:#000;letter-spacing:0.991px;-webkit-text-stroke:0.5px #000;right:1212.37px">8/9/22</span>
<span class="t" style="top:635.68px;font-size:22px;line-height:22px;color:#000;letter-spacing:-0.224px;-webkit-text-stroke:0.5px #000;right:1083.49px">58.837342</span>
<span class="t" style="top:635.68px;font-size:22px;line-height:22px;color:#000;letter-spacing:-0.224px;-webkit-text-stroke:0.5px #000;right:953.40px">59.267342</span>
<span class="t" style="top:635.68px;font-size:22px;line-height:22px;color:#000;letter-spacing:-0.224px;-webkit-text-stroke:0.5px #000;right:823.31px">57.967342</span>
<span class="t" style="top:635.68px;font-size:22px;line-height:22px;color:#000;letter-spacing:-0.224px;-webkit-text-stroke:0.5px #000;right:693.22px">58.493366</span>
<span class="t" style="top:635.68px;font-size:22px;line-height:22px;color:#000;letter-spacing:-0.224px;-webkit-text-stroke:0.5px #000;right:563.13px">58.267342</span>
<span class="t" style="top:635.68px;font-size:22px;line-height:22px;color:#000;letter-spacing:-0.257px;-webkit-text-stroke:0.5px #000;right:433.08px">6050675</span>
<span class="t" style="top:667.68px;font-size:22px;line-height:22px;color:#000;letter-spacing:0.813px;-webkit-text-stroke:0.5px #000;right:1212.55px">8/10/22</span>
<span class="t" style="top:667.68px;font-size:22px;line-height:22px;color:#000;letter-spacing:-0.044px;-webkit-text-stroke:0.5px #000;right:1083.31px">59.491102</span>
<span class="t" style="top:667.68px;font-size:22px;line-height:22px;color:#000;letter-spacing:-0.224px;-webkit-text-stroke:0.5px #000;right:953.40px">60.285886</span>
<span class="t" style="top:667.68px;font-size:22px;line-height:22px;color:#000;letter-spacing:-0.224px;-webkit-text-stroke:0.5px #000;right:823.31px">59.085886</span>
<span class="t" style="top:667.68px;font-size:22px;line-height:22px;color:#000;letter-spacing:-0.224px;-webkit-text-stroke:0.5px #000;right:693.22px">60.218578</span>
<span class="t" style="top:667.68px;font-size:22px;line-height:22px;color:#000;letter-spacing:-0.224px;-webkit-text-stroke:0.5px #000;right:563.13px">59.985886</span>
<span class="t" style="top:667.68px;font-size:22px;line-height:22px;color:#000;letter-spacing:-0.256px;-webkit-text-stroke:0.5px #000;right:433.08px">13033919</span>
<span class="t" style="top:699.68px;font-size:22px;line-height:22px;color:#000;letter-spacing:1.046px;-webkit-text-stroke:0.5px #000;right:1212.31px">8/11/22</span>
<span class="t" style="top:699.68px;font-size:22px;line-height:22px;color:#000;letter-spacing:-0.224px;-webkit-text-stroke:0.5px #000;right:1083.49px">60.889507</span>
<span class="t" style="top:699.68px;font-size:22px;line-height:22px;color:#000;letter-spacing:-0.224px;-webkit-text-stroke:0.5px #000;right:953.40px">61.754507</span>
<span class="t" style="top:699.68px;font-size:22px;line-height:22px;color:#000;letter-spacing:-0.224px;-webkit-text-stroke:0.5px #000;right:823.31px">60.554507</span>
<span class="t" style="top:699.68px;font-size:22px;line-height:22px;color:#000;letter-spacing:-0.224px;-webkit-text-stroke:0.5px #000;right:693.22px">61.592506</span>
<span class="t" style="top:699.68px;font-size:22px;line-height:22px;color:#000;letter-spacing:-0.224px;-webkit-text-stroke:0.5px #000;right:563.13px">61.354507</span>
<span class="t" style="top:699.68px;font-size:22px;line-height:22px;color:#000;letter-spacing:-0.051px;-webkit-text-stroke:0.5px #000;right:432.87px">11618414</span>
<span class="t" style="top:731.68px;font-size:22px;line-height:22px;color:#000;letter-spacing:0.813px;-webkit-text-stroke:0.5px #000;right:1212.55px">8/12/22</span>
<span class="t" style="top:731.68px;font-size:22px;line-height:22px;color:#000;letter-spacing:-0.224px;-webkit-text-stroke:0.5px #000;right:1083.49px">61.892457</span>
<span class="t" style="top:731.68px;font-size:22px;line-height:22px;color:#000;letter-spacing:-0.224px;-webkit-text-stroke:0.5px #000;right:953.40px">62.455457</span>
<span class="t" style="top:731.68px;font-size:22px;line-height:22px;color:#000;letter-spacing:-0.224px;-webkit-text-stroke:0.5px #000;right:823.31px">61.455457</span>
<span class="t" style="top:731.68px;font-size:22px;line-height:22px;color:#000;letter-spacing:-0.224px;-webkit-text-stroke:0.5px #000;right:693.22px">62.396564</span>
<span class="t" style="top:731.68px;font-size:22px;line-height:22px;color:#000;letter-spacing:-0.224px;-webkit-text-stroke:0.5px #000;right:563.13px">62.155457</span>
<span class="t" style="top:731.68px;font-size:22px;line-height:22px;color:#000;letter-spacing:-0.257px;-webkit-text-stroke:0.5px #000;right:433.08px">6602915</span>
<span class="t" style="top:763.68px;font-size:22px;line-height:22px;color:#000;letter-spacing:0.813px;-webkit-text-stroke:0.5px #000;right:1212.55px">8/15/22</span>
<span class="t" style="top:763.68px;font-size:22px;line-height:22px;color:#000;letter-spacing:-0.224px;-webkit-text-stroke:0.5px #000;right:1083.49px">61.915145</span>
<span class="t" style="top:763.68px;font-size:22px;line-height:22px;color:#000;letter-spacing:-0.224px;-webkit-text-stroke:0.5px #000;right:953.40px">62.662145</span>
<span class="t" style="top:763.68px;font-size:22px;line-height:22px;color:#000;letter-spacing:-0.224px;-webkit-text-stroke:0.5px #000;right:823.31px">61.562145</span>
<span class="t" style="top:763.68px;font-size:22px;line-height:22px;color:#000;letter-spacing:-0.224px;-webkit-text-stroke:0.5px #000;right:693.22px">62.302887</span>
<span class="t" style="top:763.68px;font-size:22px;line-height:22px;color:#000;letter-spacing:-0.224px;-webkit-text-stroke:0.5px #000;right:563.13px">62.062145</span>
<span class="t" style="top:763.68px;font-size:22px;line-height:22px;color:#000;letter-spacing:-0.257px;-webkit-text-stroke:0.5px #000;right:433.08px">4363214</span>
<span class="t" style="top:795.68px;font-size:22px;line-height:22px;color:#000;letter-spacing:0.813px;-webkit-text-stroke:0.5px #000;right:1212.55px">8/16/22</span>
<span class="t" style="top:795.68px;font-size:22px;line-height:22px;color:#000;letter-spacing:-0.224px;-webkit-text-stroke:0.5px #000;right:1083.49px">61.926195</span>
<span class="t" style="top:795.68px;font-size:22px;line-height:22px;color:#000;letter-spacing:-0.221px;-webkit-text-stroke:0.5px #000;right:953.40px">63.34195</span>
<span class="t" style="top:795.68px;font-size:22px;line-height:22px;color:#000;letter-spacing:-0.221px;-webkit-text-stroke:0.5px #000;right:823.31px">61.64195</span>
<span class="t" style="top:795.68px;font-size:22px;line-height:22px;color:#000;letter-spacing:-0.224px;-webkit-text-stroke:0.5px #000;right:693.22px">63.286495</span>
<span class="t" style="top:795.68px;font-size:22px;line-height:22px;color:#000;letter-spacing:-0.221px;-webkit-text-stroke:0.5px #000;right:563.13px">63.04195</span>
<span class="t" style="top:795.68px;font-size:22px;line-height:22px;color:#000;letter-spacing:-0.257px;-webkit-text-stroke:0.5px #000;right:433.08px">7397135</span>
<span class="t" style="top:827.68px;font-size:22px;line-height:22px;color:#000;letter-spacing:0.813px;-webkit-text-stroke:0.5px #000;right:1212.55px">8/17/22</span>
<span class="t" style="top:827.68px;font-size:22px;line-height:22px;color:#000;letter-spacing:-0.224px;-webkit-text-stroke:0.5px #000;right:1083.49px">62.493682</span>
<span class="t" style="top:827.68px;font-size:22px;line-height:22px;color:#000;letter-spacing:-0.224px;-webkit-text-stroke:0.5px #000;right:953.40px">62.947682</span>
<span class="t" style="top:827.68px;font-size:22px;line-height:22px;color:#000;letter-spacing:-0.224px;-webkit-text-stroke:0.5px #000;right:823.31px">61.847682</span>
<span class="t" style="top:827.68px;font-size:22px;line-height:22px;color:#000;letter-spacing:-0.224px;-webkit-text-stroke:0.5px #000;right:693.22px">62.338876</span>
<span class="t" style="top:827.68px;font-size:22px;line-height:22px;color:#000;letter-spacing:-0.224px;-webkit-text-stroke:0.5px #000;right:563.13px">62.147682</span>
<span class="t" style="top:827.68px;font-size:22px;line-height:22px;color:#000;letter-spacing:-0.257px;-webkit-text-stroke:0.5px #000;right:433.08px">5175624</span>
<span class="t" style="top:859.68px;font-size:22px;line-height:22px;color:#000;letter-spacing:0.813px;-webkit-text-stroke:0.5px #000;right:1212.55px">8/18/22</span>
<span class="t" style="top:859.68px;font-size:22px;line-height:22px;color:#000;letter-spacing:-0.224px;-webkit-text-stroke:0.5px #000;right:1083.49px">62.274566</span>
<span class="t" style="top:859.68px;font-size:22px;line-height:22px;color:#000;letter-spacing:-0.224px;-webkit-text-stroke:0.5px #000;right:953.40px">62.595566</span>
<span class="t" style="top:859.68px;font-size:22px;line-height:22px;color:#000;letter-spacing:-0.224px;-webkit-text-stroke:0.5px #000;right:823.31px">61.195566</span>
<span class="t" style="top:859.68px;font-size:22px;line-height:22px;color:#000;letter-spacing:-0.224px;-webkit-text-stroke:0.5px #000;right:693.22px">61.834503</span>
<span class="t" style="top:859.68px;font-size:22px;line-height:22px;color:#000;letter-spacing:-0.224px;-webkit-text-stroke:0.5px #000;right:563.13px">61.595566</span>
<span class="t" style="top:859.68px;font-size:22px;line-height:22px;color:#000;letter-spacing:-0.257px;-webkit-text-stroke:0.5px #000;right:433.08px">5124512</span>
<span class="t" style="top:891.68px;font-size:22px;line-height:22px;color:#000;letter-spacing:0.813px;-webkit-text-stroke:0.5px #000;right:1212.55px">8/19/22</span>
<span class="t" style="top:891.68px;font-size:22px;line-height:22px;color:#000;letter-spacing:-0.224px;-webkit-text-stroke:0.5px #000;right:1083.49px">61.283913</span>
<span class="t" style="top:891.68px;font-size:22px;line-height:22px;color:#000;letter-spacing:-0.224px;-webkit-text-stroke:0.5px #000;right:953.40px">61.436913</span>
<span class="t" style="top:891.68px;font-size:22px;line-height:22px;color:#000;letter-spacing:-0.224px;-webkit-text-stroke:0.5px #000;right:823.31px">60.236913</span>
<span class="t" style="top:891.68px;font-size:22px;line-height:22px;color:#000;letter-spacing:-0.224px;-webkit-text-stroke:0.5px #000;right:693.22px">60.671352</span>
<span class="t" style="top:891.68px;font-size:22px;line-height:22px;color:#000;letter-spacing:-0.224px;-webkit-text-stroke:0.5px #000;right:563.13px">60.436913</span>
<span class="t" style="top:891.68px;font-size:22px;line-height:22px;color:#000;letter-spacing:-0.257px;-webkit-text-stroke:0.5px #000;right:433.08px">4630431</span>
<span class="t" style="top:923.68px;font-size:22px;line-height:22px;color:#000;letter-spacing:0.813px;-webkit-text-stroke:0.5px #000;right:1212.55px">8/22/22</span>
<span class="t" style="top:923.68px;font-size:22px;line-height:22px;color:#000;letter-spacing:-0.224px;-webkit-text-stroke:0.5px #000;right:1083.49px">59.435507</span>
<span class="t" style="top:923.68px;font-size:22px;line-height:22px;color:#000;letter-spacing:-0.216px;-webkit-text-stroke:0.5px #000;right:953.40px">59.8507</span>
<span class="t" style="top:923.68px;font-size:22px;line-height:22px;color:#000;letter-spacing:-0.216px;-webkit-text-stroke:0.5px #000;right:823.31px">57.8507</span>
<span class="t" style="top:923.68px;font-size:22px;line-height:22px;color:#000;letter-spacing:-0.224px;-webkit-text-stroke:0.5px #000;right:693.22px">58.337627</span>
<span class="t" style="top:923.68px;font-size:22px;line-height:22px;color:#000;letter-spacing:-0.216px;-webkit-text-stroke:0.5px #000;right:563.13px">58.1507</span>
<span class="t" style="top:923.68px;font-size:22px;line-height:22px;color:#000;letter-spacing:-0.257px;-webkit-text-stroke:0.5px #000;right:433.08px">6499025</span>
<span class="t" style="top:955.68px;font-size:22px;line-height:22px;color:#000;letter-spacing:0.813px;-webkit-text-stroke:0.5px #000;right:1212.55px">8/23/22</span>
<span class="t" style="top:955.68px;font-size:22px;line-height:22px;color:#000;letter-spacing:-0.044px;-webkit-text-stroke:0.5px #000;right:1083.31px">58.541162</span>
<span class="t" style="top:955.68px;font-size:22px;line-height:22px;color:#000;letter-spacing:-0.224px;-webkit-text-stroke:0.5px #000;right:953.40px">59.377162</span>
<span class="t" style="top:955.68px;font-size:22px;line-height:22px;color:#000;letter-spacing:-0.224px;-webkit-text-stroke:0.5px #000;right:823.31px">57.977162</span>
<span class="t" style="top:955.68px;font-size:22px;line-height:22px;color:#000;letter-spacing:-0.224px;-webkit-text-stroke:0.5px #000;right:693.22px">59.406715</span>
<span class="t" style="top:955.68px;font-size:22px;line-height:22px;color:#000;letter-spacing:-0.224px;-webkit-text-stroke:0.5px #000;right:563.13px">59.177162</span>
<span class="t" style="top:955.68px;font-size:22px;line-height:22px;color:#000;letter-spacing:-0.257px;-webkit-text-stroke:0.5px #000;right:433.08px">6099353</span>
<span class="t" style="top:987.68px;font-size:22px;line-height:22px;color:#000;letter-spacing:0.813px;-webkit-text-stroke:0.5px #000;right:1212.55px">8/24/22</span>
<span class="t" style="top:987.68px;font-size:22px;line-height:22px;color:#000;letter-spacing:-0.224px;-webkit-text-stroke:0.5px #000;right:1083.49px">59.448839</span>
<span class="t" style="top:987.68px;font-size:22px;line-height:22px;color:#000;letter-spacing:-0.224px;-webkit-text-stroke:0.5px #000;right:953.40px">60.074839</span>
<span class="t" style="top:987.68px;font-size:22px;line-height:22px;color:#000;letter-spacing:-0.224px;-webkit-text-stroke:0.5px #000;right:823.31px">59.174839</span>
<span class="t" style="top:987.68px;font-size:22px;line-height:22px;color:#000;letter-spacing:-0.224px;-webkit-text-stroke:0.5px #000;right:693.22px">59.906322</span>
<span class="t" style="top:987.68px;font-size:22px;line-height:22px;color:#000;letter-spacing:-0.224px;-webkit-text-stroke:0.5px #000;right:563.13px">59.674839</span>
<span class="t" style="top:987.68px;font-size:22px;line-height:22px;color:#000;letter-spacing:-0.257px;-webkit-text-stroke:0.5px #000;right:433.08px">6104862</span>
<span class="t" style="top:1019.68px;font-size:22px;line-height:22px;color:#000;letter-spacing:0.813px;-webkit-text-stroke:0.5px #000;right:1212.55px">8/25/22</span>
<span class="t" style="top:1019.68px;font-size:22px;line-height:22px;color:#000;letter-spacing:-0.224px;-webkit-text-stroke:0.5px #000;right:1083.49px">60.395508</span>
<span class="t" style="top:1019.68px;font-size:22px;line-height:22px;color:#000;letter-spacing:-0.224px;-webkit-text-stroke:0.5px #000;right:953.40px">61.163508</span>
<span class="t" style="top:1019.68px;font-size:22px;line-height:22px;color:#000;letter-spacing:-0.224px;-webkit-text-stroke:0.5px #000;right:823.31px">60.163508</span>
<span class="t" style="top:1019.68px;font-size:22px;line-height:22px;color:#000;letter-spacing:-0.224px;-webkit-text-stroke:0.5px #000;right:693.22px">60.999218</span>
<span class="t" style="top:1019.68px;font-size:22px;line-height:22px;color:#000;letter-spacing:-0.224px;-webkit-text-stroke:0.5px #000;right:563.13px">60.763508</span>
<span class="t" style="top:1019.68px;font-size:22px;line-height:22px;color:#000;letter-spacing:-0.257px;-webkit-text-stroke:0.5px #000;right:433.08px">6663378</span>
<span class="t" style="top:1051.68px;font-size:22px;line-height:22px;color:#000;letter-spacing:0.813px;-webkit-text-stroke:0.5px #000;right:1212.55px">8/26/22</span>
<span class="t" style="top:1051.68px;font-size:22px;line-height:22px;color:#000;letter-spacing:-0.224px;-webkit-text-stroke:0.5px #000;right:1083.49px">61.197731</span>
<span class="t" style="top:1051.68px;font-size:22px;line-height:22px;color:#000;letter-spacing:-0.224px;-webkit-text-stroke:0.5px #000;right:953.40px">61.231731</span>
<span class="t" style="top:1051.68px;font-size:22px;line-height:22px;color:#000;letter-spacing:-0.224px;-webkit-text-stroke:0.5px #000;right:823.31px">58.331731</span>
<span class="t" style="top:1051.68px;font-size:22px;line-height:22px;color:#000;letter-spacing:-0.224px;-webkit-text-stroke:0.5px #000;right:693.22px">58.758781</span>
<span class="t" style="top:1051.68px;font-size:22px;line-height:22px;color:#000;letter-spacing:-0.224px;-webkit-text-stroke:0.5px #000;right:563.13px">58.531731</span>
<span class="t" style="top:1051.68px;font-size:22px;line-height:22px;color:#000;letter-spacing:-0.257px;-webkit-text-stroke:0.5px #000;right:433.08px">6886528</span>
<span class="t" style="top:1083.68px;font-size:22px;line-height:22px;color:#000;letter-spacing:0.813px;-webkit-text-stroke:0.5px #000;right:1212.55px">8/29/22</span>
<span class="t" style="top:1083.68px;font-size:22px;line-height:22px;color:#000;letter-spacing:-0.224px;-webkit-text-stroke:0.5px #000;right:1083.49px">58.424275</span>
<span class="t" style="top:1083.68px;font-size:22px;line-height:22px;color:#000;letter-spacing:-0.224px;-webkit-text-stroke:0.5px #000;right:953.40px">59.638275</span>
<span class="t" style="top:1083.68px;font-size:22px;line-height:22px;color:#000;letter-spacing:-0.224px;-webkit-text-stroke:0.5px #000;right:823.31px">58.238275</span>
<span class="t" style="top:1083.68px;font-size:22px;line-height:22px;color:#000;letter-spacing:-0.224px;-webkit-text-stroke:0.5px #000;right:693.22px">59.336768</span>
<span class="t" style="top:1083.68px;font-size:22px;line-height:22px;color:#000;letter-spacing:-0.224px;-webkit-text-stroke:0.5px #000;right:563.13px">59.138275</span>
<span class="t" style="top:1083.68px;font-size:22px;line-height:22px;color:#000;letter-spacing:-0.257px;-webkit-text-stroke:0.5px #000;right:433.08px">6279974</span>
<span class="t" style="top:1115.68px;font-size:22px;line-height:22px;color:#000;letter-spacing:0.813px;-webkit-text-stroke:0.5px #000;right:1212.55px">8/30/22</span>
<span class="t" style="top:1115.68px;font-size:22px;line-height:22px;color:#000;letter-spacing:-0.224px;-webkit-text-stroke:0.5px #000;right:1083.49px">59.928867</span>
<span class="t" style="top:1115.68px;font-size:22px;line-height:22px;color:#000;letter-spacing:-0.224px;-webkit-text-stroke:0.5px #000;right:953.40px">60.122867</span>
<span class="t" style="top:1115.68px;font-size:22px;line-height:22px;color:#000;letter-spacing:-0.224px;-webkit-text-stroke:0.5px #000;right:823.31px">58.122867</span>
<span class="t" style="top:1115.68px;font-size:22px;line-height:22px;color:#000;letter-spacing:-0.224px;-webkit-text-stroke:0.5px #000;right:693.22px">58.649494</span>
<span class="t" style="top:1115.68px;font-size:22px;line-height:22px;color:#000;letter-spacing:-0.224px;-webkit-text-stroke:0.5px #000;right:563.13px">58.422867</span>
<span class="t" style="top:1115.68px;font-size:22px;line-height:22px;color:#000;letter-spacing:-0.257px;-webkit-text-stroke:0.5px #000;right:433.08px">5495874</span>
<span class="t" style="top:1147.68px;font-size:22px;line-height:22px;color:#000;letter-spacing:0.813px;-webkit-text-stroke:0.5px #000;right:1212.55px">8/31/22</span>
<span class="t" style="top:1147.68px;font-size:22px;line-height:22px;color:#000;letter-spacing:-0.224px;-webkit-text-stroke:0.5px #000;right:1083.49px">58.868073</span>
<span class="t" style="top:1147.68px;font-size:22px;line-height:22px;color:#000;letter-spacing:-0.224px;-webkit-text-stroke:0.5px #000;right:953.40px">59.164715</span>
<span class="t" style="top:1147.68px;font-size:22px;line-height:22px;color:#000;letter-spacing:-0.224px;-webkit-text-stroke:0.5px #000;right:823.31px">57.267761</span>
<span class="t" style="top:1147.68px;font-size:22px;line-height:22px;color:#000;letter-spacing:-0.224px;-webkit-text-stroke:0.5px #000;right:693.22px">57.330212</span>
<span class="t" style="top:1147.68px;font-size:22px;line-height:22px;color:#000;letter-spacing:-0.224px;-webkit-text-stroke:0.5px #000;right:563.13px">57.108685</span>
<span class="t" style="top:1147.68px;font-size:22px;line-height:22px;color:#000;letter-spacing:-0.257px;-webkit-text-stroke:0.5px #000;right:433.08px">8199681</span>
<span class="t" style="top:1179.68px;font-size:22px;line-height:22px;color:#000;letter-spacing:0.991px;-webkit-text-stroke:0.5px #000;right:1212.37px">9/1/22</span>
<span class="t" style="top:1179.68px;font-size:22px;line-height:22px;color:#000;letter-spacing:-0.224px;-webkit-text-stroke:0.5px #000;right:1083.49px">57.181889</span>
<span class="t" style="top:1179.68px;font-size:22px;line-height:22px;color:#000;letter-spacing:-0.224px;-webkit-text-stroke:0.5px #000;right:953.40px">57.181889</span>
<span class="t" style="top:1179.68px;font-size:22px;line-height:22px;color:#000;letter-spacing:-0.044px;-webkit-text-stroke:0.5px #000;right:823.13px">55.761124</span>
<span class="t" style="top:1179.68px;font-size:22px;line-height:22px;color:#000;letter-spacing:-0.224px;-webkit-text-stroke:0.5px #000;right:693.22px">57.049179</span>
<span class="t" style="top:1179.68px;font-size:22px;line-height:22px;color:#000;letter-spacing:-0.224px;-webkit-text-stroke:0.5px #000;right:563.13px">56.828735</span>
<span class="t" style="top:1179.68px;font-size:22px;line-height:22px;color:#000;letter-spacing:-0.257px;-webkit-text-stroke:0.5px #000;right:433.08px">6386426</span>
<span class="t" style="top:1211.68px;font-size:22px;line-height:22px;color:#000;letter-spacing:0.991px;-webkit-text-stroke:0.5px #000;right:1212.37px">9/2/22</span>
<span class="t" style="top:1211.68px;font-size:22px;line-height:22px;color:#000;letter-spacing:-0.224px;-webkit-text-stroke:0.5px #000;right:1083.49px">57.603436</span>
<span class="t" style="top:1211.68px;font-size:22px;line-height:22px;color:#000;letter-spacing:-0.224px;-webkit-text-stroke:0.5px #000;right:953.40px">58.048401</span>
<span class="t" style="top:1211.68px;font-size:22px;line-height:22px;color:#000;letter-spacing:-0.224px;-webkit-text-stroke:0.5px #000;right:823.31px">56.291958</span>
<span class="t" style="top:1211.68px;font-size:22px;line-height:22px;color:#000;letter-spacing:-0.224px;-webkit-text-stroke:0.5px #000;right:693.22px">56.541763</span>
<span class="t" style="top:1211.68px;font-size:22px;line-height:22px;color:#000;letter-spacing:-0.221px;-webkit-text-stroke:0.5px #000;right:563.13px">56.32328</span>
<span class="t" style="top:1211.68px;font-size:22px;line-height:22px;color:#000;letter-spacing:-0.257px;-webkit-text-stroke:0.5px #000;right:433.08px">5171397</span><div class="a" style="left:244.3px;top:336.4px;width:380.1px;height:811.8px;border-radius:12px;background:linear-gradient(#54504c 0,#5a5552 8%,#605b58 22%,#625d5a 60%,#615c59 100%);box-shadow:0 0 0 1.1px rgba(20,20,20,.8), inset 0 0 0 1.4px rgba(255,255,255,.25), 0 12px 34px 4px rgba(0,0,0,.30), 0 1px 6px rgba(0,0,0,.28)"></div>
<div class="a" style="left:254px;top:543.8px;width:360.2px;height:44.2px;border-radius:8.5px;background:#c461cf"></div>
<div class="a" style="left:272.6px;top:531.9px;width:323.2px;height:1.9px;background:#87827e"></div>
<div class="a" style="left:272.6px;top:685.9px;width:323.2px;height:1.9px;background:#87827e"></div>
<div class="a" style="left:272.6px;top:883.9px;width:323.2px;height:1.9px;background:#87827e"></div>
<div class="a" style="left:272.6px;top:1081.9px;width:323.2px;height:1.9px;background:#87827e"></div>
<span class="t" style="top:356.53px;font-size:25.6px;line-height:25.6px;color:#ebebeb;letter-spacing:1.091px;-webkit-text-stroke:0.5px #ebebeb;left:271.90px">Cut</span>
<span class="t" style="top:400.53px;font-size:25.6px;line-height:25.6px;color:#ebebeb;letter-spacing:1.012px;-webkit-text-stroke:0.5px #ebebeb;left:271.90px">Copy</span>
<span class="t" style="top:444.53px;font-size:25.6px;line-height:25.6px;color:#ebebeb;letter-spacing:0.549px;-webkit-text-stroke:0.5px #ebebeb;left:271.90px">Paste</span>
<span class="t" style="top:488.53px;font-size:25.6px;line-height:25.6px;color:#ebebeb;letter-spacing:0.538px;-webkit-text-stroke:0.5px #ebebeb;left:271.90px">Paste Special</span>
<span class="t" style="top:554.53px;font-size:25.6px;line-height:25.6px;color:#ffffff;letter-spacing:0.981px;-webkit-text-stroke:0.5px #ffffff;left:271.90px">Insert</span>
<span class="t" style="top:598.53px;font-size:25.6px;line-height:25.6px;color:#ebebeb;letter-spacing:0.869px;-webkit-text-stroke:0.5px #ebebeb;left:271.90px">Delete</span>
<span class="t" style="top:642.53px;font-size:25.6px;line-height:25.6px;color:#ebebeb;letter-spacing:0.742px;-webkit-text-stroke:0.5px #ebebeb;left:271.90px">Clear Contents</span>
<span class="t" style="top:708.53px;font-size:25.6px;line-height:25.6px;color:#ebebeb;letter-spacing:0.627px;-webkit-text-stroke:0.5px #ebebeb;left:271.90px">Format Cells...</span>
<span class="t" style="top:752.53px;font-size:25.6px;line-height:25.6px;color:#ebebeb;letter-spacing:0.829px;-webkit-text-stroke:0.5px #ebebeb;left:271.90px">Column Width...</span>
<span class="t" style="top:796.53px;font-size:25.6px;line-height:25.6px;color:#ebebeb;letter-spacing:1.140px;-webkit-text-stroke:0.5px #ebebeb;left:271.90px">Hide</span>
<span class="t" style="top:840.53px;font-size:25.6px;line-height:25.6px;color:#ebebeb;letter-spacing:1.015px;-webkit-text-stroke:0.5px #ebebeb;left:271.90px">Unhide</span>
<span class="t" style="top:906.53px;font-size:25.6px;line-height:25.6px;color:#989490;letter-spacing:0.581px;-webkit-text-stroke:0.5px #989490;left:271.90px">Beebee&rsquo;s iPhone</span>
<span class="t" style="top:950.53px;font-size:25.6px;line-height:25.6px;color:#ebebeb;letter-spacing:0.694px;-webkit-text-stroke:0.5px #ebebeb;left:271.90px">Take Photo</span>
<span class="t" style="top:994.53px;font-size:25.6px;line-height:25.6px;color:#ebebeb;letter-spacing:0.779px;-webkit-text-stroke:0.5px #ebebeb;left:271.90px">Scan Documents</span>
<span class="t" style="top:1038.53px;font-size:25.6px;line-height:25.6px;color:#ebebeb;letter-spacing:0.869px;-webkit-text-stroke:0.5px #ebebeb;left:271.90px">Add Sketch</span>
<span class="t" style="top:1104.53px;font-size:25.6px;line-height:25.6px;color:#ebebeb;letter-spacing:0.807px;-webkit-text-stroke:0.5px #ebebeb;left:271.90px">Services</span>
<svg width="1377" height="1222" style="left:0;top:0" viewBox="0 0 1377 1222"><path d="M560.51 363.92 A3.31 3.32 0 1 0 557.21 367.24 H567.99 A3.31 3.32 0 1 0 564.69 363.92 V373.88 A3.31 3.32 0 1 0 567.99 370.56 H557.21 A3.31 3.32 0 1 0 560.51 373.88 Z" fill="none" stroke="#a6a19d" stroke-width="2.2"/><path d="M560.51 407.92 A3.31 3.32 0 1 0 557.21 411.24 H567.99 A3.31 3.32 0 1 0 564.69 407.92 V417.88 A3.31 3.32 0 1 0 567.99 414.56 H557.21 A3.31 3.32 0 1 0 560.51 417.88 Z" fill="none" stroke="#a6a19d" stroke-width="2.2"/><path d="M560.51 451.92 A3.31 3.32 0 1 0 557.21 455.24 H567.99 A3.31 3.32 0 1 0 564.69 451.92 V461.88 A3.31 3.32 0 1 0 567.99 458.56 H557.21 A3.31 3.32 0 1 0 560.51 461.88 Z" fill="none" stroke="#a6a19d" stroke-width="2.2"/><path d="M560.51 715.92 A3.31 3.32 0 1 0 557.21 719.24 H567.99 A3.31 3.32 0 1 0 564.69 715.92 V725.88 A3.31 3.32 0 1 0 567.99 722.56 H557.21 A3.31 3.32 0 1 0 560.51 725.88 Z" fill="none" stroke="#a6a19d" stroke-width="2.2"/><path d="M554.2 808.6 L561.9000000000001 800.6 L569.6 808.6" fill="none" stroke="#a6a19d" stroke-width="2.8" stroke-linecap="round" stroke-linejoin="round"/><path d="M526.4 852.6 L534.1 844.6 L541.8 852.6" fill="none" stroke="#a6a19d" stroke-width="2.8" stroke-linecap="round" stroke-linejoin="round"/><path d="M561.0 843 L571.0 853.4 H565.8 V861.4 H556.1999999999999 V853.4 H551.0 Z" fill="none" stroke="#a6a19d" stroke-width="2.3" stroke-linejoin="round"/><path d="M583.2 492.6 L591.8 500.8 L583.2 509.0" fill="none" stroke="#e8e8e8" stroke-width="2.9" stroke-linecap="round" stroke-linejoin="round"/><path d="M583.2 1108.6 L591.8 1116.8 L583.2 1125.0" fill="none" stroke="#e8e8e8" stroke-width="2.9" stroke-linecap="round" stroke-linejoin="round"/></svg>
<span class="t" style="top:356.13px;font-size:25.6px;line-height:25.6px;color:#a6a19d;-webkit-text-stroke:0.3px #a6a19d;right:781.70px;transform:scaleX(1.03);transform-origin:100% 50%">X</span>
<span class="t" style="top:400.13px;font-size:25.6px;line-height:25.6px;color:#a6a19d;-webkit-text-stroke:0.3px #a6a19d;right:781.40px;transform:scaleX(1.03);transform-origin:100% 50%">C</span>
<span class="t" style="top:444.13px;font-size:25.6px;line-height:25.6px;color:#a6a19d;-webkit-text-stroke:0.3px #a6a19d;right:781.40px;transform:scaleX(1.03);transform-origin:100% 50%">V</span>
<span class="t" style="top:708.13px;font-size:25.6px;line-height:25.6px;color:#a6a19d;-webkit-text-stroke:0.3px #a6a19d;right:783.90px;transform:scaleX(1.03);transform-origin:100% 50%">1</span>
<span class="t" style="top:796.13px;font-size:25.6px;line-height:25.6px;color:#a6a19d;-webkit-text-stroke:0.3px #a6a19d;right:782.20px;transform:scaleX(1.16);transform-origin:100% 50%">0</span>
<span class="t" style="top:840.13px;font-size:25.6px;line-height:25.6px;color:#a6a19d;-webkit-text-stroke:0.3px #a6a19d;right:782.20px;transform:scaleX(1.16);transform-origin:100% 50%">0</span><svg width="1377" height="1222" style="left:0;top:0" viewBox="0 0 1377 1222"><path d="M1092.6 753.8 L249 339.4" stroke="#e8402a" stroke-width="5.9" fill="none"/><path d="M228.4 329.3 L255.9 329.3 L244.7 350.2 Z" fill="#e8402a"/></svg>
<span class="t" style="top:691.18px;font-size:24px;line-height:24px;color:#e8523e;left:882.50px;width:600px;text-align:center">Hold Control</span>
<span class="t" style="top:720.18px;font-size:24px;line-height:24px;color:#e8523e;left:882.50px;width:600px;text-align:center">and at the</span>
<span class="t" style="top:749.18px;font-size:24px;line-height:24px;color:#e8523e;left:882.50px;width:600px;text-align:center">same time</span>
<span class="t" style="top:778.18px;font-size:24px;line-height:24px;color:#e8523e;left:882.50px;width:600px;text-align:center">click on the</span>
<span class="t" style="top:807.18px;font-size:24px;line-height:24px;color:#e8523e;left:882.50px;width:600px;text-align:center">first column</span>
<span class="t" style="top:836.18px;font-size:24px;line-height:24px;color:#e8523e;left:882.50px;width:600px;text-align:center">with prices</span>
</div></body></html>
